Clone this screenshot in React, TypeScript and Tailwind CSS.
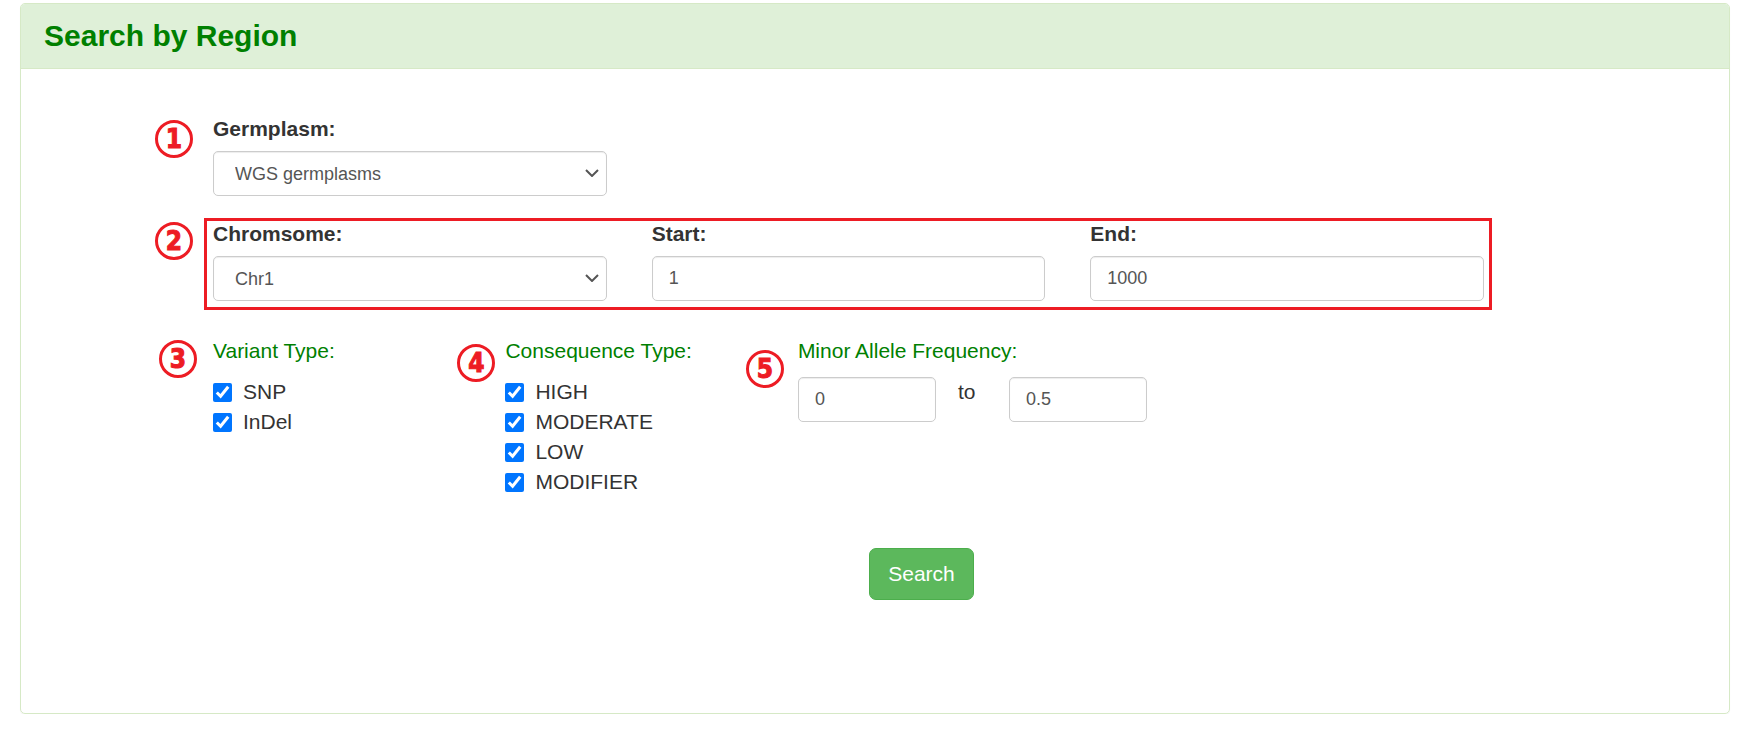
/**
 * SearchByRegion - Variant search form with numbered guide marks
 */

import { useState } from 'react';
import type { ReactNode } from 'react';

const fieldStyles =
  'block w-full h-[45px] rounded-[5px] border border-[#ccc] bg-white px-4 text-[18px] leading-6 text-[#555] shadow-[inset_0_1px_1px_rgba(0,0,0,0.075)]';

const consequenceTypes = ['HIGH', 'MODERATE', 'LOW', 'MODIFIER'];
const variantTypes = ['SNP', 'InDel'];

// Red circled number that points at a form section
function Marker({ value, className }: { value: number; className: string }) {
  return (
    <span
      className={`absolute flex size-[38px] items-center justify-center rounded-full border-[3px] border-[#ed1c24] font-['DejaVu_Sans_Condensed','DejaVu_Sans',sans-serif] text-[26px] font-bold leading-none text-[#ed1c24] [-webkit-text-stroke:1px_#ed1c24] ${className}`}
    >
      {value}
    </span>
  );
}

function Field({ id, label, children }: { id: string; label: string; children: ReactNode }) {
  return (
    <div>
      <label htmlFor={id} className="mb-[7px] block font-bold">
        {label}
      </label>
      {children}
    </div>
  );
}

function Select({ id, options }: { id: string; options: string[] }) {
  return (
    <div className="relative">
      <select id={id} className={`${fieldStyles} appearance-none pl-[21px]`}>
        {options.map((option) => (
          <option key={option}>{option}</option>
        ))}
      </select>
      <svg
        className="pointer-events-none absolute right-2 top-[18px] h-2 w-[14px] text-[#555]"
        fill="none"
        stroke="currentColor"
        viewBox="0 0 14 8"
      >
        <path strokeWidth={2} d="M1 1l6 6 6-6" />
      </svg>
    </div>
  );
}

function CheckGroup({ title, items }: { title: string; items: string[] }) {
  const [checked, setChecked] = useState<string[]>(items);

  function toggle(item: string) {
    setChecked((prev) => (prev.includes(item) ? prev.filter((i) => i !== item) : [...prev, item]));
  }

  return (
    <fieldset>
      <legend className="mb-[11px] whitespace-nowrap text-[#008000]">{title}</legend>
      {items.map((item) => (
        <label key={item} className="flex items-center gap-[11px]">
          <input
            type="checkbox"
            className="size-[19px] accent-[#0075ff]"
            checked={checked.includes(item)}
            onChange={() => toggle(item)}
          />
          {item}
        </label>
      ))}
    </fieldset>
  );
}

export default function App() {
  return (
    <main className="bg-white pl-5 pr-6 pt-[3px] font-['Liberation_Sans',Arial,sans-serif] text-[21px] leading-[30px] text-[#333]">
      <section className="rounded-[5px] border border-[#d6e9c6] shadow-[0_1px_1px_rgba(0,0,0,0.05)]">
        <header className="rounded-t-[4px] border-b border-[#d6e9c6] bg-[#dff0d8] px-[23px] py-[14px]">
          <h1 className="text-[30px] font-bold leading-9 text-[#008000]">Search by Region</h1>
        </header>

        <form className="pb-[113px] pl-48 pr-[245px] pt-[45px]" onSubmit={(e) => e.preventDefault()}>
          <div className="relative grid grid-cols-3 gap-x-[45px]">
            <Marker value={1} className="-left-[58px] top-[6px]" />
            <Field id="germplasm" label="Germplasm:">
              <Select id="germplasm" options={['WGS germplasms']} />
            </Field>
          </div>

          <div className="relative mt-[23px] grid grid-cols-3 gap-x-[45px]">
            <Marker value={2} className="-left-[58px] top-[3px]" />
            <div className="pointer-events-none absolute -bottom-[9px] -left-[9px] -right-[8px] -top-px border-[3px] border-[#ed1c24]" />
            <Field id="chromosome" label="Chromsome:">
              <Select id="chromosome" options={['Chr1']} />
            </Field>
            <Field id="start" label="Start:">
              <input id="start" type="text" defaultValue="1" className={fieldStyles} />
            </Field>
            <Field id="end" label="End:">
              <input id="end" type="text" defaultValue="1000" className={fieldStyles} />
            </Field>
          </div>

          <div className="mt-[35px] grid grid-cols-9 gap-x-[45px]">
            <div className="relative col-span-2">
              <Marker value={3} className="-left-[54px] top-1" />
              <CheckGroup title="Variant Type:" items={variantTypes} />
            </div>
            <div className="relative col-span-2">
              <Marker value={4} className="-left-[48px] top-2" />
              <CheckGroup title="Consequence Type:" items={consequenceTypes} />
            </div>
            <div className="relative col-span-5">
              <Marker value={5} className="-left-[52px] top-[14px]" />
              <fieldset>
                <legend className="mb-[11px] text-[#008000]">Minor Allele Frequency:</legend>
                <div className="flex items-start">
                  <div className="w-[138px]">
                    <input type="text" aria-label="Minimum frequency" defaultValue="0" className={fieldStyles} />
                  </div>
                  <span className="w-[73px] pl-[22px]">to</span>
                  <div className="w-[138px]">
                    <input type="text" aria-label="Maximum frequency" defaultValue="0.5" className={fieldStyles} />
                  </div>
                </div>
              </fieldset>
            </div>
          </div>

          <div className="mt-[51px] flex justify-center pl-[146px]">
            <button
              type="submit"
              className="rounded-[7px] border border-[#4cae4c] bg-[#5cb85c] px-[18px] py-[10px] text-white"
            >
              Search
            </button>
          </div>
        </form>
      </section>
    </main>
  );
}
